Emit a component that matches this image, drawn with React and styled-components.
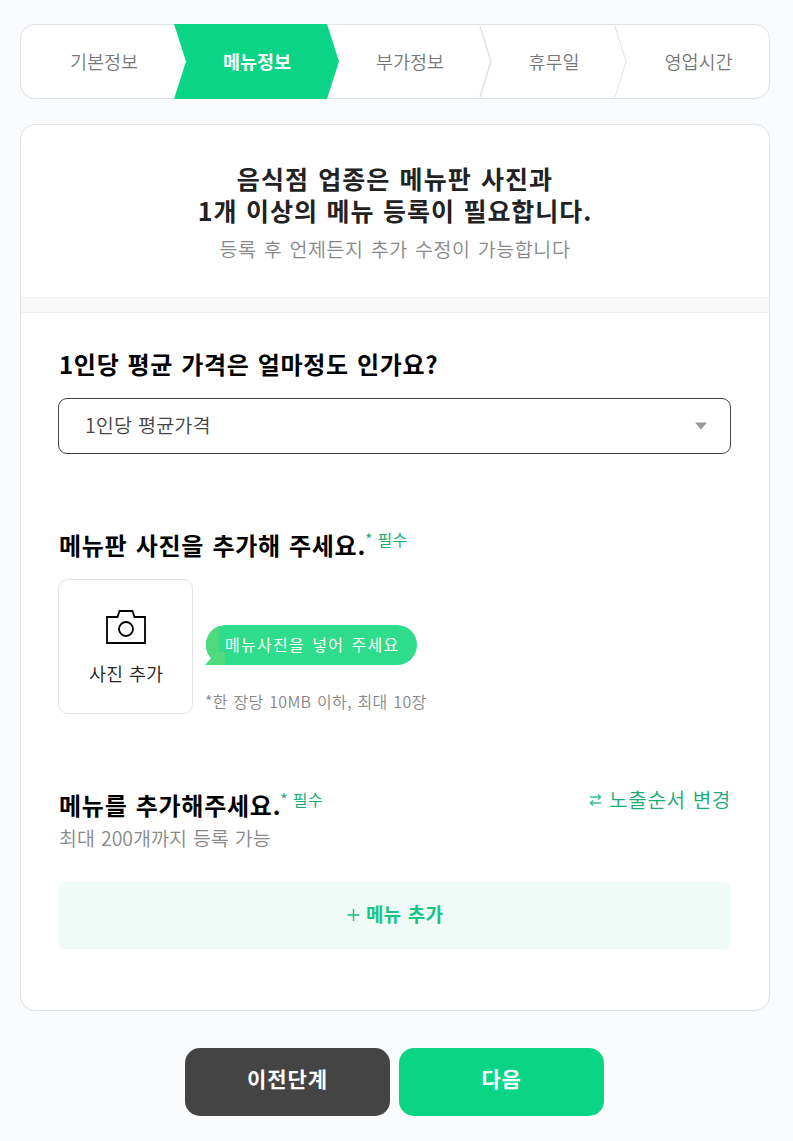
import React from 'react';
import styled, { createGlobalStyle } from 'styled-components';

const Global = createGlobalStyle`
  *, *::before, *::after { box-sizing: border-box; }
  body {
    margin: 0;
    background: #fafbfd;
    font-family: "Noto Sans CJK KR", "Noto Sans", sans-serif;
  }
  h1, h2, p { margin: 0; font-weight: inherit; }
  button { font-family: inherit; border: 0; padding: 0; cursor: pointer; }
`;

const Page = styled.main`
  width: 793px;
  height: 1141px;
  padding: 24px 23px 0 20px;
  display: flex;
  flex-direction: column;
`;

const Text = styled.span`
  display: block;
  white-space: nowrap;
  font-size: ${(p) => p.$size}px;
  line-height: ${(p) => p.$line}px;
  font-weight: ${(p) => p.$weight || 350};
  color: ${(p) => p.$color || '#000'};
  letter-spacing: ${(p) => p.$track || 0}px;
  word-spacing: ${(p) => p.$word || 0}px;
`;

const Stepper = styled.nav`
  display: flex;
  height: 75px;
  background: #fff;
  border: 1px solid #dfe2e6;
  border-radius: 15px;
`;

const Step = styled.div`
  display: flex;
  flex: 0 0 auto;
  width: ${(p) => p.$width}px;
  margin: ${(p) => (p.$active ? '-1px -12px -1px 0' : '0 -12px 0 0')};
  padding-left: ${(p) => (p.$last ? 12 : 0)}px;
  background: ${(p) => (p.$active ? '#0ad486' : 'none')};
  clip-path: ${(p) => (p.$active ? 'polygon(0 0, 153px 0, 100% 50%, 153px 100%, 0 100%, 12px 50%)' : 'none')};
`;

const StepLabel = styled(Text)`
  flex: 1;
  align-self: center;
  padding: 0 0 2px 1px;
  text-align: center;
`;

const Divider = styled.svg`
  flex: 0 0 13px;
  height: 73px;
  margin-left: -13px;
`;

const Card = styled.section`
  margin-top: 25px;
  height: 887px;
  background: #fff;
  border: 1px solid #dfe2e6;
  border-radius: 15px;
`;

const Intro = styled.header`
  height: 172px;
  padding-top: 37px;
  text-align: center;
`;

const Subtitle = styled(Text)`
  padding-top: 2px;
`;

const Band = styled.div`
  height: 16px;
  background: #f8f8f8;
  border: solid #f0f1f2;
  border-width: 1px 0;
`;

const Form = styled.div`
  padding: 32px 38px 0 37px;
`;

const Select = styled.button`
  display: flex;
  align-items: center;
  justify-content: space-between;
  width: 673px;
  height: 56px;
  margin-top: 15px;
  padding: 0 23px 0 26px;
  background: #fff;
  border: 1px solid #444;
  border-radius: 9px;
`;

const SelectValue = styled(Text)`
  padding-bottom: 2px;
`;

const Heading = styled.div`
  display: flex;
  align-items: flex-start;
  padding-left: 1px;
  margin-top: ${(p) => p.$gap || 0}px;
`;

const RequiredMark = styled(Text)`
  padding-top: 1px;
  margin-left: -1px;
`;

const Photos = styled.div`
  display: flex;
  margin-top: 15px;
  gap: 13px;
`;

const PhotoButton = styled.button`
  display: flex;
  flex-direction: column;
  align-items: center;
  width: 135px;
  height: 135px;
  padding: 30px 0 0 1px;
  background: #fff;
  border: 1px solid #e2e3e5;
  border-radius: 10px;
`;

const PhotoNotes = styled.div`
  padding-top: 46px;
`;

const Caption = styled(Text)`
  margin: 24px 0 0 -1px;
`;

const Bubble = styled.div`
  position: relative;
  display: flex;
  align-items: center;
  width: 211px;
  height: 40px;
  padding: 0 0 2px 19px;
  border-radius: 20px;
  background: #2edc8c;
`;

const Tail = styled.svg`
  position: absolute;
  left: -1px;
  top: 0;
`;

const BubbleText = styled(Text)`
  position: relative;
`;

const OrderButton = styled.button`
  display: flex;
  align-items: center;
  gap: 7px;
  margin-left: auto;
  background: none;
`;

const AddMenu = styled.button`
  display: flex;
  align-items: center;
  justify-content: center;
  gap: 6px;
  width: 673px;
  height: 67px;
  margin-top: 30px;
  padding: 0 0 3px 1px;
  background: #f0fbf8;
  border-radius: 7px;
`;

const Actions = styled.footer`
  display: flex;
  gap: 9px;
  margin-top: 37px;
  padding-left: 165px;
`;

const Action = styled.button`
  width: 205px;
  height: 68px;
  padding-bottom: 8px;
  border-radius: 15px;
  background: ${(p) => (p.$primary ? '#0ad486' : '#444')};
`;

const steps = [
  { label: '기본정보', width: 165 },
  { label: '메뉴정보', width: 165, active: true },
  { label: '부가정보', width: 165, line: 1.5 },
  { label: '휴무일', width: 147, line: 1 },
  { label: '영업시간', width: 154, last: true },
];

function Required() {
  return <RequiredMark $size={16} $line={24} $color="#18ad72" $weight={400} $track={0.3} $word={1}>* 필수</RequiredMark>;
}

export default function App() {
  return (
    <>
      <Global />
      <Page>
        <Stepper>
          {steps.map((s) => (
            <Step key={s.label} $width={s.width} $active={s.active} $last={s.last}>
              <StepLabel $size={18.5} $line={28} $weight={s.active ? 700 : 350} $color={s.active ? '#fff' : '#777'}>
                {s.label}
              </StepLabel>
              {s.line && (
                <Divider viewBox="0 0 13 73">
                  <path d="M1 1 L12 36.5 L1 72" fill="none" stroke="#dfe2e4" strokeWidth={s.line} />
                </Divider>
              )}
            </Step>
          ))}
        </Stepper>

        <Card>
          <Intro>
            <h1>
              <Text $size={25} $line={32} $weight={700} $color="#222" $track={1.1} $word={2.3}>
                음식점 업종은 메뉴판 사진과
              </Text>
              <Text $size={25} $line={32} $weight={700} $color="#222" $track={0.95} $word={2}>
                1개 이상의 메뉴 등록이 필요합니다.
              </Text>
            </h1>
            <Subtitle as="p" $size={19.5} $line={42} $color="#888" $track={0.6} $word={2.2}>
              등록 후 언제든지 추가 수정이 가능합니다
            </Subtitle>
          </Intro>
          <Band />
          <Form>
            <Heading>
              <Text as="h2" $size={24} $line={38} $weight={700} $track={0.7} $word={2}>
                1인당 평균 가격은 얼마정도 인가요?
              </Text>
            </Heading>
            <Select>
              <SelectValue $size={19.7} $line={30} $color="#444" $word={1.7}>1인당 평균가격</SelectValue>
              <svg width="12" height="8" viewBox="0 0 12 8"><path d="M0 .5h12L6 7.5z" fill="#999" /></svg>
            </Select>

            <Heading $gap={72}>
              <Text as="h2" $size={24} $line={38} $weight={700} $track={0.7} $word={2.2}>
                메뉴판 사진을 추가해 주세요.
              </Text>
              <Required />
            </Heading>
            <Photos>
              <PhotoButton>
                <svg width="40" height="34" viewBox="0 0 40 34" fill="none" stroke="#000" strokeWidth="1.8">
                  <path d="M1 7h10.5L13.5 1h13L28.5 7H39v26H1z" />
                  <circle cx="20" cy="19" r="7" />
                </svg>
                <Text $size={18.5} $line={58} $color="#222" $word={2}>사진 추가</Text>
              </PhotoButton>
              <PhotoNotes>
                <Bubble>
                  <Tail width="20" height="40" viewBox="0 0 20 40">
                    <path d="M14 0.9A20 20 0 0 0 6 33L0 40H20V27H14z" fill="#4ddb7d" />
                  </Tail>
                  <BubbleText $size={16} $line={26} $color="#fff" $weight={400} $track={1.25} $word={2.5}>
                    메뉴사진을 넣어 주세요
                  </BubbleText>
                </Bubble>
                <Caption $size={16} $line={24} $color="#888" $track={0.3} $word={1.9}>
                  *한 장당 10MB 이하, 최대 10장
                </Caption>
              </PhotoNotes>
            </Photos>

            <Heading $gap={72}>
              <Text as="h2" $size={24} $line={38} $weight={700} $track={0.75} $word={2}>
                메뉴를 추가해주세요.
              </Text>
              <Required />
              <OrderButton>
                <svg width="13" height="14" viewBox="0 0 13 14" fill="none" stroke="#35c48c" strokeWidth="1.5">
                  <path d="M1 4h10.5M9 1.5L11.5 4 9 6.5M12 10H1.5M4 7.5L1.5 10 4 12.5" />
                </svg>
                <Text $size={20.2} $line={28} $color="#18ad72" $track={0.6} $word={1.8}>노출순서 변경</Text>
              </OrderButton>
            </Heading>
            <Heading>
              <Text as="p" $size={19.5} $line={28} $color="#888" $word={1.7}>최대 200개까지 등록 가능</Text>
            </Heading>
            <AddMenu>
              <svg width="13" height="13" viewBox="0 0 13 13"><path d="M.5 7h12M6.5 1v12" stroke="#18bd7e" strokeWidth="1.4" /></svg>
              <Text $size={19} $line={28} $weight={700} $color="#14c682" $track={0.2} $word={2}>메뉴 추가</Text>
            </AddMenu>
          </Form>
        </Card>

        <Actions>
          <Action>
            <Text $size={21} $line={30} $weight={700} $color="#fff" $track={0.9}>이전단계</Text>
          </Action>
          <Action $primary>
            <Text $size={21} $line={30} $weight={700} $color="#fff" $track={0.6}>다음</Text>
          </Action>
        </Actions>
      </Page>
    </>
  );
}
